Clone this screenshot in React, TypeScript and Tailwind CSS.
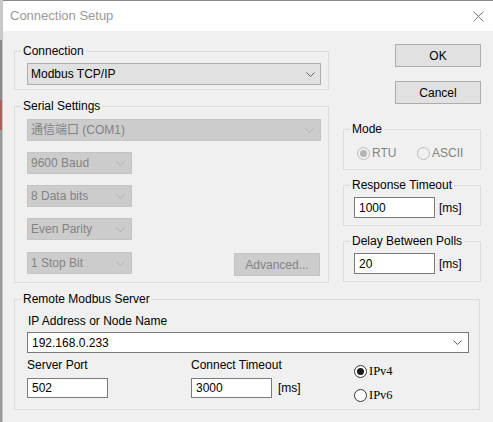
import React from "react";

function Chevron({ color }: { color: string }) {
  return (
    <svg width="9" height="5" viewBox="0 0 9 5" fill="none">
      <path d="M0.5 0.5 L4.5 4.5 L8.5 0.5" stroke={color} strokeWidth="1" />
    </svg>
  );
}

function Group({
  legend,
  className,
  innerClass,
  children,
}: {
  legend: string;
  className: string;
  innerClass: string;
  children: React.ReactNode;
}) {
  return (
    <fieldset className={"min-w-0 border border-[#dcdcdc] " + className}>
      <legend className="ml-[6px] px-[2px] leading-[14px] text-black">{legend}</legend>
      <div className={innerClass}>{children}</div>
    </fieldset>
  );
}

function DisabledSelect({ text, className }: { text: string; className: string }) {
  return (
    <div
      className={
        "flex h-[22px] items-center justify-between border border-[#c4c4c4] bg-[#cccccc] pl-[3px] pr-[6px] text-[#838383] " +
        className
      }
    >
      <span className="leading-[14px]">{text}</span>
      <Chevron color="#b0b0b0" />
    </div>
  );
}

function Radio({
  checked,
  disabled,
  label,
  serif,
}: {
  checked: boolean;
  disabled: boolean;
  label: string;
  serif?: boolean;
}) {
  return (
    <div className="flex h-[14px] items-center">
      <div
        className={
          disabled
            ? "flex h-[13px] w-[13px] items-center justify-center rounded-full border border-[#bcbcbc] bg-[#f0f0f0]"
            : "flex h-[13px] w-[13px] items-center justify-center rounded-full border border-[#333333] bg-white"
        }
      >
        {checked && (
          <div
            className={
              disabled
                ? "h-[7px] w-[7px] rounded-full bg-[#b4b4b4]"
                : "h-[7px] w-[7px] rounded-full bg-[#1a1a1a]"
            }
          />
        )}
      </div>
      <span
        className={
          (disabled ? "text-[#838383] " : "text-black ") +
          (serif
            ? "ml-[2px] font-['Liberation_Serif',serif] text-[12.5px] leading-[14px]"
            : "ml-[2px] leading-[14px]")
        }
      >
        {label}
      </span>
    </div>
  );
}

function TextBox({ value, className }: { value: string; className: string }) {
  return (
    <div
      className={
        "flex items-center border border-[#7a7a7a] bg-white pl-[4px] leading-[14px] text-black " + className
      }
    >
      {value}
    </div>
  );
}

export default function App() {
  return (
    <div className="flex h-[422px] w-[493px] overflow-hidden bg-[#f0f0f0] font-['Liberation_Sans','Noto_Sans_CJK_SC',sans-serif] text-[12px] text-black">
      <div className="flex w-[2px] flex-col bg-[#7d7d7d]">
        <div className="h-[40px] bg-[#c9c9c9]" />
        <div className="h-[60px] bg-[#8a8a8a]" />
        <div className="h-[30px] bg-[#b85a5a]" />
        <div className="flex-1 bg-[#9a9a9a]" />
      </div>
      <div className="flex flex-1 flex-col border-l border-[#c6c6c6]">
        <div className="h-px bg-[#8a8a8a]" />
        <div className="flex h-[30px] items-center justify-between bg-white pl-[7px] pr-[9px]">
          <span className="text-[13px] leading-[30px] text-[#999999]">Connection Setup</span>
          <svg width="11" height="11" viewBox="0 0 11 11" fill="none">
            <path d="M0.5 0.5 L10.5 10.5 M10.5 0.5 L0.5 10.5" stroke="#777777" strokeWidth="1" />
          </svg>
        </div>
        <div className="flex flex-col pl-[11px] pt-[13px]">
          <div className="flex items-start">
            <div className="flex w-[315px] flex-col">
              <Group legend="Connection" className="" innerClass="pb-[4px] pl-[12px] pr-[7px] pt-[5px]">
                <div className="flex h-[22px] items-center justify-between border border-[#adadad] bg-[#e1e1e1] pl-[3px] pr-[5px]">
                  <span className="leading-[14px]">Modbus TCP/IP</span>
                  <Chevron color="#606060" />
                </div>
              </Group>
              <Group legend="Serial Settings" className="mt-[9px]" innerClass="pb-[6px] pl-[12px] pr-[7px] pt-[6px]">
                <div className="flex flex-col">
                  <DisabledSelect text="通信端口 (COM1)" className="w-full" />
                  <DisabledSelect text="9600 Baud" className="mt-[11px] w-[105px]" />
                  <DisabledSelect text="8 Data bits" className="mt-[11px] w-[105px]" />
                  <DisabledSelect text="Even Parity" className="mt-[11px] w-[105px]" />
                  <div className="mt-[12px] flex items-start justify-between">
                    <DisabledSelect text="1 Stop Bit" className="w-[105px]" />
                    <div className="mr-px mt-px flex h-[23px] w-[86px] items-center justify-center border border-[#c4c4c4] bg-[#cccccc] text-[#838383]">
                      Advanced...
                    </div>
                  </div>
                </div>
              </Group>
            </div>
            <div className="ml-[14px] flex w-[138px] flex-col">
              <div className="flex h-[23px] w-[86px] items-center justify-center self-end border border-[#adadad] bg-[#e1e1e1]">
                OK
              </div>
              <div className="mt-[14px] flex h-[23px] w-[86px] items-center justify-center self-end border border-[#adadad] bg-[#e1e1e1]">
                Cancel
              </div>
              <Group legend="Mode" className="mt-[18px]" innerClass="pb-[9px] pl-[13px] pt-[10px]">
                <div className="flex">
                  <div className="w-[60px]">
                    <Radio checked disabled label="RTU" />
                  </div>
                  <Radio checked={false} disabled label="ASCII" />
                </div>
              </Group>
              <Group legend="Response Timeout" className="mt-[8px]" innerClass="pb-[7px] pl-[10px] pt-[5px]">
                <div className="flex items-center">
                  <TextBox value="1000" className="h-[21px] w-[81px]" />
                  <span className="ml-[4px] leading-[14px]">[ms]</span>
                </div>
              </Group>
              <Group legend="Delay Between Polls" className="mt-[8px]" innerClass="pb-[7px] pl-[10px] pt-[5px]">
                <div className="flex items-center">
                  <TextBox value="20" className="h-[21px] w-[81px]" />
                  <span className="ml-[4px] leading-[14px]">[ms]</span>
                </div>
              </Group>
            </div>
          </div>
          <Group legend="Remote Modbus Server" className="mt-[9px] w-[466px]" innerClass="pb-[7px] pl-[12px] pr-[10px] pt-[8px]">
            <div className="ml-px leading-[14px]">IP Address or Node Name</div>
            <div className="mt-[4px] flex h-[21px] items-center justify-between border border-[#7a7a7a] bg-white pl-[4px] pr-[6px]">
              <span className="leading-[14px]">192.168.0.233</span>
              <Chevron color="#606060" />
            </div>
            <div className="mt-[5px] flex items-start">
              <div className="flex w-[164px] flex-col">
                <div className="leading-[14px]">Server Port</div>
                <TextBox value="502" className="mt-[6px] h-[20px] w-[81px]" />
              </div>
              <div className="flex w-[163px] flex-col">
                <div className="leading-[14px]">Connect Timeout</div>
                <div className="mt-[6px] flex items-center">
                  <TextBox value="3000" className="h-[20px] w-[81px]" />
                  <span className="ml-[6px] leading-[14px]">[ms]</span>
                </div>
              </div>
              <div className="flex flex-col gap-[10px] pt-[6px]">
                <Radio checked disabled={false} label="IPv4" serif />
                <Radio checked={false} disabled={false} label="IPv6" serif />
              </div>
            </div>
          </Group>
        </div>
      </div>
    </div>
  );
}
